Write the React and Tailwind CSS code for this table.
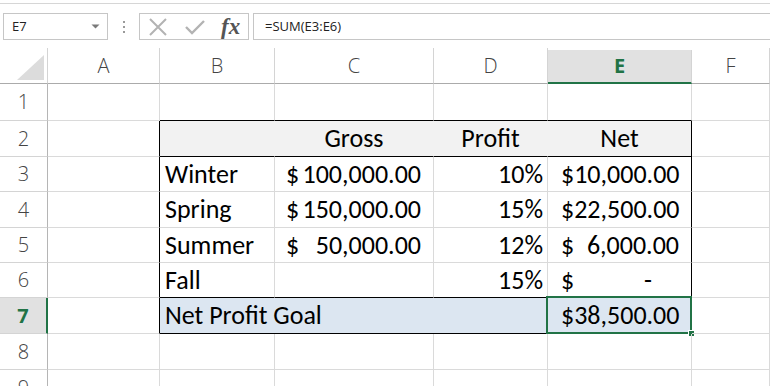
import React from "react";

const cellFont = { fontFamily: "Carlito, Calibri, Lato, sans-serif" };

const cols = ["A", "B", "C", "D", "E", "F"];

// Accounting-style cell: dollar sign hugs the left, number hugs the right
const Money = ({ value, padR = "pr-[12px]", padL = "pl-[11px]" }) => (
  <div className={`flex w-full items-center justify-between ${padL} ${padR}`}>
    <span>$</span>
    <span>{value}</span>
  </div>
);

const Cell = ({ children, className = "" }) => (
  <div className={`relative flex items-center border-r border-b text-[26px] text-black ${className}`} style={cellFont}>
    {children}
  </div>
);

const RowHead = ({ n, active }) => (
  <div
    className={`flex items-center justify-center border-b border-b-[#d4d4d4] font-[Open_Sans] text-[20px] ${
      active
        ? "border-r-2 border-r-[#217346] bg-[#e1e1e1] font-bold text-[#217346]"
        : "border-r border-r-[#b5b5b5] font-light text-[#444]"
    }`}
  >
    {n}
  </div>
);

const g = "border-r-[#dadada] border-b-[#dadada]";

export default function App() {
  return (
    <div className="h-[386px] w-[770px] overflow-hidden bg-white">
      {/* Formula bar */}
      <div className="h-[3px]" />
      <div className="flex h-[45px] items-start border-t border-[#d6d6d6] pt-[9px]">
        <div className="ml-[3px] flex h-[27px] w-[105px] items-center justify-between border border-[#c6c6c6] pl-[8px] pr-[7px] font-[Open_Sans] text-[13px] text-[#222]">
          <span>E7</span>
          <svg width="9" height="5" viewBox="0 0 9 5">
            <path d="M0.5 0.5 L8.5 0.5 L4.5 4.5 Z" fill="#7a7a7a" />
          </svg>
        </div>
        <div className="flex h-[27px] w-[31px] flex-col items-center justify-center gap-[3px]">
          <span className="h-[2px] w-[2px] bg-[#9a9a9a]" />
          <span className="h-[2px] w-[2px] bg-[#9a9a9a]" />
          <span className="h-[2px] w-[2px] bg-[#9a9a9a]" />
        </div>
        <div className="flex h-[27px] w-[110px] items-center border border-[#c6c6c6] pl-[8px]">
          <svg width="20" height="18" viewBox="0 0 20 18">
            <path d="M2 1 L18 17 M18 1 L2 17" stroke="#b3b3b3" strokeWidth="2" />
          </svg>
          <svg className="ml-[17px]" width="20" height="16" viewBox="0 0 20 16">
            <path d="M1 8 L7 14 L19 2" stroke="#b3b3b3" strokeWidth="2.4" fill="none" />
          </svg>
          <span className="ml-[16px] font-['Liberation_Serif'] text-[23px] font-bold italic leading-none text-[#555]">fx</span>
        </div>
        <div className="ml-[4px] flex h-[27px] flex-1 items-center border-y border-l border-[#c6c6c6] pl-[11px] font-[Open_Sans] text-[13px] text-[#222]">
          =SUM(E3:E6)
        </div>
      </div>

      {/* Sheet */}
      <div className="grid grid-cols-[48px_112px_115px_159px_114px_144px_78px] grid-rows-[36px_37px_36px_35px_36px_35px_35px_36px_36px_36px]">
        {/* Column headers */}
        <div className="relative border-r border-b border-r-[#d4d4d4] border-b-[#ababab]">
          <svg className="absolute left-[17px] top-[7px]" width="28" height="25" viewBox="0 0 28 25">
            <path d="M27 0 L27 25 L0 25 Z" fill="#dcdcdc" />
          </svg>
        </div>
        {cols.map((c) =>
          c === "E" ? (
            <div
              key={c}
              className="mt-[2px] flex items-center justify-center border-r border-b-2 border-r-[#d4d4d4] border-b-[#217346] bg-[#e1e1e1] font-[Open_Sans] text-[20px] font-bold text-[#217346]"
            >
              {c}
            </div>
          ) : (
            <div
              key={c}
              className="flex items-center justify-center border-r border-b border-r-[#d4d4d4] border-b-[#ababab] font-[Open_Sans] text-[20px] font-light text-[#444]"
            >
              {c}
            </div>
          )
        )}

        {/* Row 1 */}
        <RowHead n="1" />
        <Cell className={g} />
        <Cell className="border-r-[#dadada] border-b-black" />
        <Cell className="border-r-[#dadada] border-b-black" />
        <Cell className="border-r-[#dadada] border-b-black" />
        <Cell className="border-r-[#dadada] border-b-black" />
        <Cell className={g} />

        {/* Row 2: headings */}
        <RowHead n="2" />
        <Cell className="border-r-black border-b-[#dadada]" />
        <Cell className="border-r-[#f2f2f2] border-b-black bg-[#f2f2f2]" />
        <Cell className="justify-center border-r-[#f2f2f2] border-b-black bg-[#f2f2f2]">Gross</Cell>
        <Cell className="justify-center border-r-[#f2f2f2] border-b-black bg-[#f2f2f2]">Profit</Cell>
        <Cell className="justify-center border-r-black border-b-black bg-[#f2f2f2]">Net</Cell>
        <Cell className={g} />

        {/* Row 3 */}
        <RowHead n="3" />
        <Cell className="border-r-black border-b-[#dadada]" />
        <Cell className={`${g} pl-[5px]`}>Winter</Cell>
        <Cell className={g}>
          <Money value="100,000.00" />
        </Cell>
        <Cell className={`${g} justify-end pr-[4px]`}>10%</Cell>
        <Cell className="border-r-black border-b-[#dadada]">
          <Money value="10,000.00" padL="pl-[13px]" padR="pr-[12px]" />
        </Cell>
        <Cell className={g} />

        {/* Row 4 */}
        <RowHead n="4" />
        <Cell className="border-r-black border-b-[#dadada]" />
        <Cell className={`${g} pl-[5px]`}>Spring</Cell>
        <Cell className={g}>
          <Money value="150,000.00" />
        </Cell>
        <Cell className={`${g} justify-end pr-[4px]`}>15%</Cell>
        <Cell className="border-r-black border-b-[#dadada]">
          <Money value="22,500.00" padL="pl-[13px]" padR="pr-[12px]" />
        </Cell>
        <Cell className={g} />

        {/* Row 5 */}
        <RowHead n="5" />
        <Cell className="border-r-black border-b-[#dadada]" />
        <Cell className={`${g} pl-[5px]`}>Summer</Cell>
        <Cell className={g}>
          <Money value="50,000.00" />
        </Cell>
        <Cell className={`${g} justify-end pr-[4px]`}>12%</Cell>
        <Cell className="border-r-black border-b-[#dadada]">
          <Money value="6,000.00" padL="pl-[13px]" padR="pr-[12px]" />
        </Cell>
        <Cell className={g} />

        {/* Row 6 */}
        <RowHead n="6" />
        <Cell className="border-r-black border-b-[#dadada]" />
        <Cell className="border-r-[#dadada] border-b-black pl-[5px]">Fall</Cell>
        <Cell className="border-r-[#dadada] border-b-black" />
        <Cell className="justify-end border-r-[#dadada] border-b-black pr-[4px]">15%</Cell>
        <Cell className="border-r-black border-b-black">
          <Money value="-" padL="pl-[13px]" padR="pr-[39px]" />
        </Cell>
        <Cell className={g} />

        {/* Row 7: total */}
        <RowHead n="7" active />
        <Cell className="border-r-black border-b-[#dadada]" />
        <Cell className="col-span-3 whitespace-nowrap border-r-[#dce6f1] border-b-black bg-[#dce6f1] pl-[5px]">Net Profit Goal</Cell>
        <Cell className="border-r-black border-b-black bg-[#dce6f1]">
          <div className="w-full pl-[13px]">$38,500.00</div>
          <div className="absolute -left-[2px] -top-[2px] -right-[1px] -bottom-[1px] border-2 border-[#217346]" />
          <div className="absolute -bottom-[4px] -right-[4px] h-[7px] w-[7px] border border-white bg-[#217346]" />
        </Cell>
        <Cell className={g} />

        {/* Rows 8-9 */}
        {["8", "9"].map((n) => (
          <React.Fragment key={n}>
            <RowHead n={n} />
            <Cell className={g} />
            <Cell className={g} />
            <Cell className={g} />
            <Cell className={g} />
            <Cell className={g} />
            <Cell className={g} />
          </React.Fragment>
        ))}
      </div>
    </div>
  );
}
